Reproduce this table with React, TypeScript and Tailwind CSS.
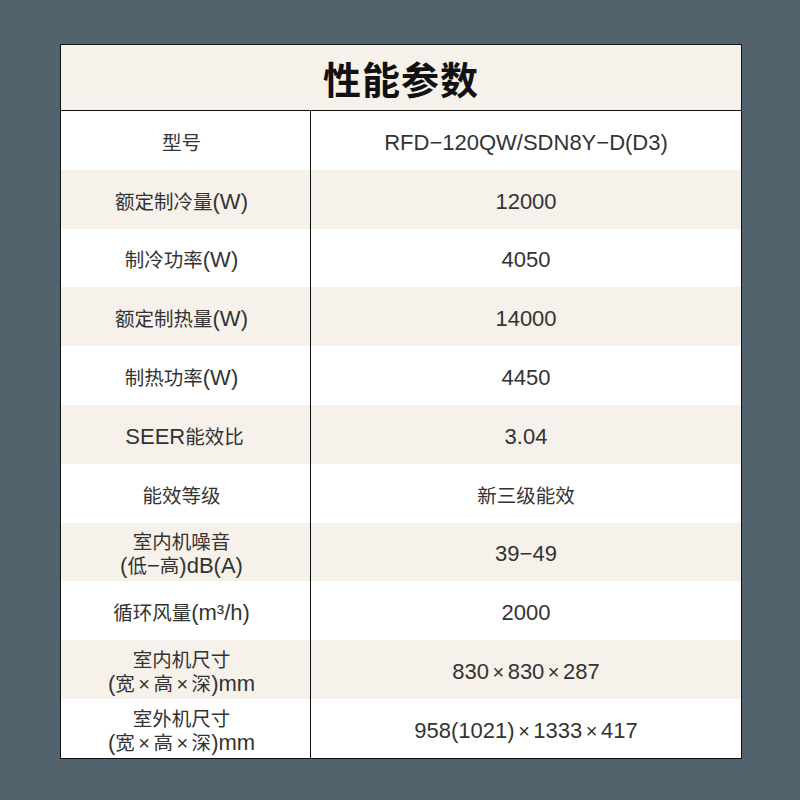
import type { ReactNode } from 'react';

type Row = { label: string[]; value: string };

const ROWS: Row[] = [
  { label: ['型号'], value: 'RFD−120QW/SDN8Y−D(D3)' },
  { label: ['额定制冷量(W)'], value: '12000' },
  { label: ['制冷功率(W)'], value: '4050' },
  { label: ['额定制热量(W)'], value: '14000' },
  { label: ['制热功率(W)'], value: '4450' },
  { label: ['\u00a0SEER能效比'], value: '3.04' },
  { label: ['能效等级'], value: '新三级能效' },
  { label: ['室内机噪音', '(低−高)dB(A)'], value: '39−49' },
  { label: ['循环风量(m³/h)'], value: '2000' },
  { label: ['室内机尺寸', '(宽×高×深)mm'], value: '830×830×287' },
  { label: ['室外机尺寸', '(宽×高×深)mm'], value: '958(1021)×1333×417' },
];

// CJK glyphs in the source render a touch smaller than the latin runs,
// and the × signs get a little breathing room
function Mixed({ text }: { text: string }) {
  const parts = text.split(/([\u4e00-\u9fff]+|×)/);
  return (
    <>
      {parts.map((part, i) =>
        part === '×' ? (
          <span key={i} className="px-[3.5px] text-[20px]">
            ×
          </span>
        ) : /[\u4e00-\u9fff]/.test(part) ? (
          <span key={i} className="text-[19.5px]">
            {part}
          </span>
        ) : (
          <span key={i}>{part}</span>
        ),
      )}
    </>
  );
}

function Cell({ children, className = '' }: { children: ReactNode; className?: string }) {
  return <div className={`flex flex-col items-center justify-center text-center ${className}`}>{children}</div>;
}

export default function App() {
  return (
    <div
      className="w-[800px] h-[800px] bg-[#53636e] pt-[44px] pl-[60px]"
      style={{ fontFamily: '"Liberation Sans", "Noto Sans CJK SC", sans-serif' }}
    >
      <div className="w-[682px] border border-[#111] bg-white flex flex-col">
        <div className="h-[66px] bg-[#f6f1eb] border-b border-[#111] flex items-center justify-center">
          <span className="text-[38px] font-bold text-[#111] leading-none tracking-[1px]" style={{ fontFamily: '"Noto Sans CJK SC", sans-serif' }}>
            性能参数
          </span>
        </div>
        {ROWS.map((row, i) => (
          <div key={i} className={`h-[58.8px] flex text-[22px] text-[#333] ${i % 2 === 1 ? 'bg-[#f6f1eb]' : 'bg-white'}`}>
            <Cell className="w-[250px] border-r border-[#111] leading-[24px] pt-[5px] pr-[8px]">
              {row.label.map((line, j) => (
                <div key={j} className="whitespace-pre">
                  <Mixed text={line} />
                </div>
              ))}
            </Cell>
            <Cell className="flex-1 leading-[24px] pt-[5px]">
              <div>
                <Mixed text={row.value} />
              </div>
            </Cell>
          </div>
        ))}
      </div>
    </div>
  );
}
